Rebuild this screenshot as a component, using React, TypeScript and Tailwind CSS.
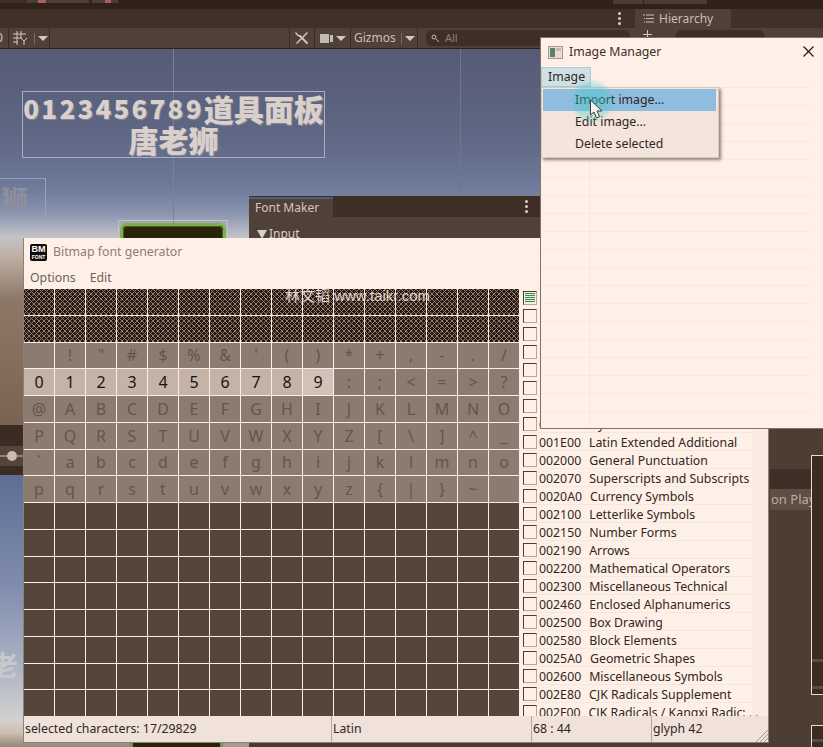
import React from "react";

const UI_FONT = "font-['Noto_Sans','Noto_Sans_CJK_SC',sans-serif]";

const GRID_ROWS = [
  " !\"#$%&'()*+,-./",
  "0123456789:;<=>?",
  "@ABCDEFGHIJKLMNO",
  "PQRSTUVWXYZ[\\]^_",
  "`abcdefghijklmno",
  "pqrstuvwxyz{|}~ ",
];

const BLOCKS: [string, string][] = [
  ["001D00", "Symbols"],
  ["001E00", "Latin Extended Additional"],
  ["002000", "General Punctuation"],
  ["002070", "Superscripts and Subscripts"],
  ["0020A0", "Currency Symbols"],
  ["002100", "Letterlike Symbols"],
  ["002150", "Number Forms"],
  ["002190", "Arrows"],
  ["002200", "Mathematical Operators"],
  ["002300", "Miscellaneous Technical"],
  ["002460", "Enclosed Alphanumerics"],
  ["002500", "Box Drawing"],
  ["002580", "Block Elements"],
  ["0025A0", "Geometric Shapes"],
  ["002600", "Miscellaneous Symbols"],
  ["002E80", "CJK Radicals Supplement"],
  ["002F00", "CJK Radicals / Kangxi Radic: . ."],
];

const Kebab = () => (
  <div className="flex flex-col gap-[2px]">
    <span className="w-[3px] h-[3px] rounded-full bg-[#d8cfc7]" />
    <span className="w-[3px] h-[3px] rounded-full bg-[#d8cfc7]" />
    <span className="w-[3px] h-[3px] rounded-full bg-[#d8cfc7]" />
  </div>
);

const Caret = () => (
  <span className="shrink-0 w-0 h-0 border-x-[5px] border-x-transparent border-t-[5px] border-t-[#d2c8c0]" />
);

const Checkbox = ({ checked }: { checked?: boolean }) => (
  <div className="shrink-0 w-[14px] h-[14px] border border-t-[#4a3d36] border-l-[#4a3d36] border-r-[#b5a69c] border-b-[#b5a69c] bg-[#fff0e7]">
    {checked && (
      <div className="m-px h-[10px] bg-[repeating-linear-gradient(to_bottom,#3f8f4a_0,#3f8f4a_1px,#dcebd6_1px,#dcebd6_2px)]" />
    )}
  </div>
);

const Toolbar = () => (
  <div className="h-[21px] shrink-0 flex items-stretch bg-[#50403a] border-b border-[#2e211a] text-[#d2c8c0]">
    <div className="w-[9px] border-r border-[#3a2c25] text-[12px] leading-[20px] overflow-hidden">
      <span className="-ml-[4px] block">0</span>
    </div>
    <div className="w-[41px] border-r border-[#3a2c25] flex items-center pl-[4px]">
      <svg className="shrink-0" width="14" height="14" viewBox="0 0 14 14" fill="none" stroke="#d2c8c0" strokeWidth="1">
        <path d="M0 3h13M0 7h8M0 11h5M4 0v14M8 0v8M8 7l3 3 3-3M11 10v4" />
      </svg>
      <span className="ml-[7px] mr-[3px] w-px h-[11px] bg-[#7b6c62]" />
      <Caret />
    </div>
    <div className="w-[239px]" />
    <div className="w-[26px] border-x border-[#3a2c25] flex items-center justify-center">
      <svg width="14" height="14" viewBox="0 0 14 14" stroke="#d2c8c0" fill="none" strokeLinecap="round">
        <path d="M5 5l7 7" strokeWidth="2" />
        <path d="M1 2c1 2 3 3 4 3" strokeWidth="1.500" />
        <path d="M12 2L8 6M6 8l-4 4" strokeWidth="1.500" />
      </svg>
    </div>
    <div className="w-[35px] flex items-center pl-[5px]">
      <span className="w-[9px] h-[9px] bg-[#c4bab2]" />
      <span className="ml-px mr-[3px] w-[3px] h-[7px] bg-[#c4bab2]" />
      <Caret />
    </div>
    <div className="w-[68px] border-x border-[#3a2c25] flex items-center pl-[3px]">
      <span className={`${UI_FONT} text-[12px] text-[#c9bfb7]`}>Gizmos</span>
      <span className="ml-[5px] mr-[3px] w-px h-[11px] bg-[#7b6c62]" />
      <Caret />
    </div>
    <div className="ml-[8px] w-[204px] my-[2px] rounded-[6px] bg-[#3d2e26] flex items-center pl-[5px] gap-[5px]">
      <svg width="9" height="9" viewBox="0 0 9 9" fill="none" stroke="#c4bab2" strokeWidth="1">
        <circle cx="3" cy="3" r="2" />
        <path d="M5 5l3 3" />
      </svg>
      <span className={`${UI_FONT} text-[11px] text-[#8d8077]`}>All</span>
    </div>
    <div className="ml-[5px] flex-1 bg-[#50403a] pl-[8px] pt-[2px] flex items-start">
      <svg className="shrink-0" width="9" height="9" viewBox="0 0 9 9" stroke="#d2c8c0" strokeWidth="1">
        <path d="M4.500 0v9M0 4.500h9" />
      </svg>
      <span className="ml-[23px] w-[90px] h-[14px] rounded-[7px] bg-[#3d2e26]" />
    </div>
  </div>
);

const SceneOne = () => (
  <div className="relative h-[376px] overflow-hidden bg-[linear-gradient(to_bottom,#565a75_0,#5f6885_90px,#6f7b9b_140px,#8b95b0_165px,#c4c4c6_188px,#bfb3a6_205px,#8d7868_250px,#7a6353_376px)]">
    <div className="absolute left-[173px] top-0 h-[190px] w-px bg-[#7b809a]" />
    <div className="absolute left-[460px] top-0 h-[147px] w-px bg-[#6d7591]" />

    <div className="absolute left-[22px] top-[42px] w-[303px] h-[67px] border border-[#a9aec2] font-['Noto_Sans_CJK_SC',sans-serif] font-black text-center text-[#d9cfcb] [text-shadow:1px_1px_1px_#8f8794]">
      <div className="h-[32px] flex items-center justify-center leading-[30px] whitespace-nowrap">
        <span className="text-[26px] tracking-[2.200px]">0123456789</span>
        <span className="text-[30px]">道具面板</span>
      </div>
      <div className="h-[30px] text-[30px] leading-[30px] whitespace-nowrap">唐老狮</div>
    </div>

    <div className="absolute -left-px top-[129px] w-[47px] h-[43px] border border-[#9aa2b7] overflow-hidden">
      <span className="absolute -left-[26px] top-[2px] font-['Noto_Sans_CJK_SC',sans-serif] font-bold text-[27px] leading-[36px] text-[#8f8f9e] whitespace-nowrap">老狮</span>
    </div>

    <div className="absolute left-[118px] top-[171px] w-[110px] h-[20px] border border-[#c2c6c0] px-px pt-[2px]">
      <div className="h-[30px] rounded-[7px] bg-[#2b2308] border-[3px] border-[#7fae4e]">
        <div className="h-full rounded-[5px] border border-[#3f5f28]" />
      </div>
    </div>
  </div>
);

const SceneBand = () => (
  <div className="h-[50px] flex flex-col bg-[#3b2b22]">
    <div className="h-[21px]" />
    <div className="h-[20px] bg-[#54443a] flex items-center">
      <span className="w-[7px] h-[2px] bg-[#8f8278]" />
      <span className="w-[10px] h-[10px] rounded-full bg-[#c9bdb3]" />
      <span className="w-[6px] h-[2px] bg-[#8f8278]" />
    </div>
  </div>
);

const SceneTwo = () => (
  <div className="relative flex-1 overflow-hidden bg-[linear-gradient(to_bottom,#5d6d93_0,#7f8cad_110px,#aab2c4_190px,#d3d1cf_245px,#cdbfae_258px,#8f8272_273px)]">
    <span className="absolute -left-[9px] top-[172px] font-['Noto_Sans_CJK_SC',sans-serif] font-bold text-[27px] leading-[36px] text-[#c8c8cc]">老</span>
    <div className="absolute left-[130px] top-[268px] w-[93px] h-[10px] border-x-[3px] border-[#6d9a46] bg-[#2b2308]" />
    <div className="absolute left-[223px] top-[268px] w-[26px] h-[10px] bg-[#a89a8c]" />
    <div className="absolute left-[249px] top-[268px] w-[300px] h-[10px] bg-[#4a3a30]" />
  </div>
);

const RightColumn = () => (
  <div className="flex-1 flex justify-end bg-[#4d3d33]">
    <div className="w-[53px] flex">
      <div className="w-[41px] pt-[420px] flex flex-col">
        <div className="h-[20px] bg-[#3f2f26]" />
        <div className={`${UI_FONT} h-[21px] bg-[#5f4e43] text-[#b9ada3] text-[13px] leading-[21px] whitespace-nowrap overflow-hidden pl-[1px]`}>
          on Play
        </div>
      </div>
      <div className="flex-1 pt-[406px] flex flex-col overflow-hidden">
        <div className="h-[240px] bg-[#3d2c22] border-l border-t border-b border-[#e8dcd3] flex flex-col">
          <div className="h-[203px]" />
          <div className="h-[3px] bg-[#5c4c42]" />
          <div className="h-[24px]" />
          <div className="h-[3px] bg-[#5c4c42]" />
        </div>
        <div className="h-[30px]" />
        <div className="flex-1 bg-[#3d2c22] border-l border-t border-[#e8dcd3] pt-[13px]">
          <div className="h-[3px] bg-[#5c4c42]" />
        </div>
      </div>
    </div>
  </div>
);

const FontMaker = () => (
  <div className={`${UI_FONT} absolute left-[249px] top-[195px] w-[291px] h-[50px] bg-[#50403a] border-t border-[#7d7f8f]`}>
    <div className="h-[21px] flex items-stretch bg-[#3e2e26]">
      <div className="w-[84px] mt-px border-t-2 border-[#47607f] bg-[#50403a] pl-[6px] text-[12px] leading-[18px] text-[#d2c8c0]">Font Maker</div>
      <div className="flex-1 flex items-center justify-end pr-[12px]"><Kebab /></div>
    </div>
    <div className="pl-[8px] pt-[8px] flex items-center gap-[2px] text-[12px] text-[#d8cfc7]">
      <span className="w-0 h-0 border-x-[5px] border-x-transparent border-t-[9px] border-t-[#d8cfc7]" />
      <span>Input</span>
    </div>
  </div>
);

const FontGrid = () => (
  <div className="relative w-[496px] h-[427px] shrink-0 bg-[#ffeee4]">
    <div className="grid grid-cols-[repeat(16,30px)] grid-rows-[repeat(16,1fr)] gap-px h-full text-[16px]">
      {Array.from({ length: 32 }).map((_, i) => (
        <div
          key={`h${i}`}
          className="bg-[#261810] bg-[linear-gradient(45deg,transparent_44%,#8f7d6f_44%,#8f7d6f_56%,transparent_56%),linear-gradient(-45deg,transparent_44%,#8f7d6f_44%,#8f7d6f_56%,transparent_56%)] bg-[length:5px_5px]"
        />
      ))}
      {GRID_ROWS.map((row, r) =>
        row.split("").map((ch, c) => {
          const selected = r === 1 && c < 10;
          return (
            <div
              key={`${r}-${c}`}
              className={`flex items-center justify-center leading-none ${
                selected
                  ? c === 9
                    ? "bg-[#d0c2b6] text-[#1c130e]"
                    : "bg-[#c4b4a8] text-[#1c130e]"
                  : "bg-[#8c7b70] text-[#65554b]"
              }`}
            >
              {ch === " " ? "" : ch}
            </div>
          );
        })
      )}
      {Array.from({ length: 128 }).map((_, i) => (
        <div key={`e${i}`} className="bg-[#55453b]" />
      ))}
    </div>
    <span className="absolute left-[261px] -top-[3px] font-['Liberation_Sans','Noto_Sans_CJK_SC',sans-serif] text-[15px] leading-[20px] text-[#e0d7cf] whitespace-nowrap">
      林文韬 www.taikr.com
    </span>
  </div>
);

const BlockList = () => (
  <div className="relative flex-1 flex min-w-0 overflow-hidden h-[427px]">
    <div className="absolute right-0 top-0 bottom-0 w-[16px] bg-[#f9ebe2]" />
    <div className="relative w-[233px] shrink-0 pl-[3px]">
      <div className="h-[18px] flex items-center"><Checkbox checked /></div>
      {Array.from({ length: 6 }).map((_, i) => (
        <div key={i} className="h-[18px] flex items-center"><Checkbox /></div>
      ))}
      {BLOCKS.map(([code, name]) => (
        <div key={code} className="h-[18px] flex items-center gap-[2px] border-b border-[#f6e7de] text-[12.3px] leading-[19px] text-[#2f2621] whitespace-nowrap">
          <Checkbox />
          <span className="pt-px">{code}</span>
          <span className="ml-[6px] pt-px">{name}</span>
        </div>
      ))}
    </div>
  </div>
);

const StatusCell = ({ width, children }: { width: string; children: React.ReactNode }) => (
  <div className={`${width} border-r border-[#b5a69c] pl-px text-[12.3px] leading-[26px] text-[#2f2621] whitespace-nowrap overflow-hidden`}>
    {children}
  </div>
);

const BitmapFontWindow = () => (
  <div className={`${UI_FONT} absolute left-[23px] top-[238px] w-[746px] h-[505px] flex flex-col bg-[#fff0e7] border-l border-b border-r border-[#8d8077]`}>
    <div className="h-[28px] shrink-0 flex items-center pl-[6px] gap-[6px]">
      <div className="w-[17px] h-[17px] rounded-[2px] bg-[#100a06] flex flex-col items-center justify-center text-white font-['Liberation_Sans',sans-serif] font-bold leading-none">
        <span className="text-[9px] leading-[9px]">BM</span>
        <span className="text-[5px] leading-[6px]">FONT</span>
      </div>
      <span className="pt-px text-[12.3px] text-[#8a7e76]">Bitmap font generator</span>
    </div>
    <div className="h-[23px] shrink-0 flex items-center pl-[6px] pt-px gap-[14px] text-[12.3px] text-[#6b5f57]">
      <span>Options</span>
      <span>Edit</span>
    </div>
    <div className="flex">
      <FontGrid />
      <BlockList />
    </div>
    <div className="flex-1 flex bg-[#f0e2da] relative">
      <StatusCell width="w-[308px]">selected characters: 17/29829</StatusCell>
      <StatusCell width="w-[200px]">Latin</StatusCell>
      <StatusCell width="w-[120px]">68 : 44</StatusCell>
      <div className="flex-1 pl-px text-[12.3px] leading-[26px] text-[#2f2621]">glyph 42</div>
      <svg className="absolute right-0 bottom-0" width="13" height="13" viewBox="0 0 13 13" stroke="#a89a90" strokeWidth="1">
        <path d="M13 1L1 13M13 5L5 13M13 9L9 13" />
      </svg>
    </div>
  </div>
);

const ImageManagerWindow = () => (
  <div className={`${UI_FONT} absolute left-[540px] top-[37px] w-[284px] h-[392px] flex flex-col bg-[#fff0e7] border border-[#7f7269]`}>
    <div className="h-[29px] shrink-0 flex items-center pl-[7px] relative">
      <div className="w-[15px] h-[13px] border border-[#a4978e] bg-[#e8dcd4] p-px flex gap-px">
        <span className="w-[6px] bg-[#5c7f72]" />
        <span className="w-[5px] h-[3px] bg-[#c7bbb2]" />
      </div>
      <span className="ml-[6px] text-[12.3px] text-[#3a2f29]">Image Manager</span>
      <svg className="absolute right-[9px] top-[8px]" width="11" height="11" viewBox="0 0 11 11" stroke="#1f1713" strokeWidth="1.200" fill="none">
        <path d="M0.5 0.5l10 10M10.5 0.5l-10 10" />
      </svg>
    </div>
    <div className="h-[20px] shrink-0 flex">
      <div className="w-[50px] bg-[#cfe0e4] border border-[#aecadb] pl-[6px] text-[12.3px] leading-[18px] text-[#2f2621]">Image</div>
    </div>
    <div className="flex-1 flex">
      <div className="w-[270px] bg-[repeating-linear-gradient(to_bottom,#f7e8df_0,#f7e8df_1px,transparent_1px,transparent_18px)] flex">
        <div className="w-[49px] border-r border-[#f7e8df]" />
      </div>
    </div>
  </div>
);

const ImageMenu = () => (
  <div className={`${UI_FONT} absolute left-[541px] top-[87px] w-[178px] h-[71px] bg-[#f3e4dc] border border-[#d5c8bf] pt-[1px] pl-px text-[12.3px] text-[#2f2621] shadow-[2px_2px_3px_#8f8176]`}>
    <div className="w-[173px] h-[22px] bg-[#8fbde0] pl-[32px] leading-[22px]">Import image...</div>
    <div className="h-[22px] pl-[32px] leading-[22px]">Edit image...</div>
    <div className="h-[22px] pl-[32px] leading-[22px]">Delete selected</div>
  </div>
);

const Cursor = () => (
  <div className="absolute left-[570px] top-[79px] w-[44px] h-[44px]">
    <div className="absolute inset-0 rounded-full bg-[radial-gradient(circle,rgba(70,200,200,0.55)_0,rgba(70,200,200,0.3)_55%,rgba(70,200,200,0)_72%)]" />
    <svg className="absolute left-[19px] top-[20px]" width="15" height="22" viewBox="0 0 15 22">
      <path d="M1.5 1v15l3.5-3 2.5 6 3-1.3-2.5-5.700h5z" fill="#f6f1ee" stroke="#3a3a3a" strokeWidth="1" strokeLinejoin="round" />
    </svg>
  </div>
);

export default function App() {
  return (
    <div className="relative w-[823px] h-[747px] overflow-hidden flex flex-col bg-[#4d3d33]">
      <div className="h-[9px] shrink-0 bg-[#2f221b] flex items-start">
        <div className="w-[25px] h-[3px] bg-[#3e2f27]" />
        <div className="ml-px w-[63px] h-[3px] bg-[#4c3c32] pl-[12px]"><div className="w-[8px] h-[3px] bg-[#a8645a]" /></div>
        <div className="ml-[3px] w-[26px] h-[3px] bg-[#4c3c32] pl-[13px]"><div className="w-[6px] h-[3px] bg-[#a8645a]" /></div>
        <div className="ml-[495px] w-[30px] h-[4px] bg-[#4c3c32]" />
        <div className="ml-px w-[63px] h-[4px] bg-[#4c3c32]" />
      </div>
      <div className="h-[19px] shrink-0 bg-[#3f3028] flex items-center">
        <div className="ml-[618px] w-[3px]"><Kebab /></div>
        <div className={`${UI_FONT} ml-[14px] w-[96px] h-full bg-[#50403a] rounded-t-[2px] flex items-center pl-[8px] gap-[5px] text-[12px] text-[#c9bfb7]`}>
          <svg className="shrink-0" width="11" height="9" viewBox="0 0 11 9" stroke="#c9bfb7" strokeWidth="1"><path d="M0 1h2M3 1h8M1 4.500h1M3 4.500h8M1 8h1M3 8h8" /></svg>
          <span>Hierarchy</span>
        </div>
      </div>
      <Toolbar />
      <div className="flex-1 flex min-h-0">
        <div className="w-[540px] flex flex-col shrink-0">
          <SceneOne />
          <SceneBand />
          <SceneTwo />
        </div>
        <RightColumn />
      </div>
      <FontMaker />
      <BitmapFontWindow />
      <ImageManagerWindow />
      <ImageMenu />
      <Cursor />
    </div>
  );
}
